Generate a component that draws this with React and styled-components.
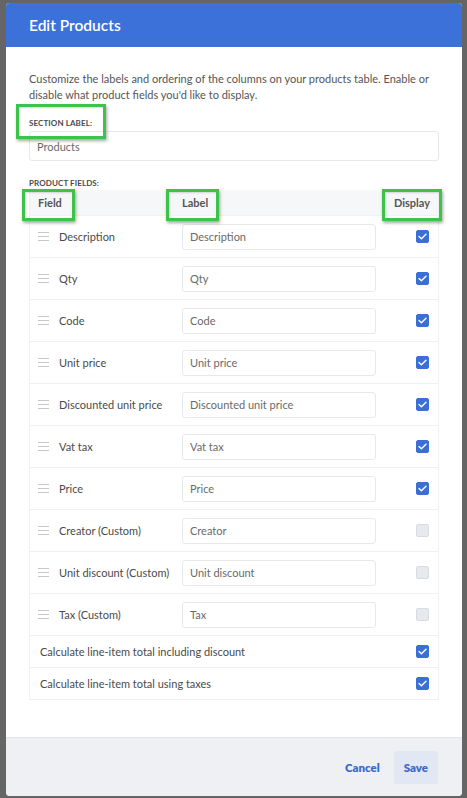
import React from "react"
import styled, { createGlobalStyle } from "styled-components"

// ---- Styles ----

const GlobalStyle = createGlobalStyle`
  html, body {
    margin: 0;
    padding: 0;
    background: #656565;
    font-family: Lato, "Open Sans", Arial, sans-serif;
    -webkit-font-smoothing: antialiased;
  }
`

const Backdrop = styled.div`
  height: 798px;
  box-sizing: border-box;
  padding: 3px 5px 2px 6px;
  background: #656565;
`

const Modal = styled.div`
  width: 456px;
  height: 793px;
  display: flex;
  flex-direction: column;
  background: #fff;
  border-radius: 4px;
  overflow: hidden;
`

const Header = styled.div`
  height: 44px;
  flex: none;
  display: flex;
  align-items: center;
  padding-left: 23px;
  background: #3b71d8;
  color: #fff;
  font-size: 15.5px;
  font-weight: 600;
`

const Body = styled.div`
  flex: 1;
  padding: 24px 23px 0;
`

const Intro = styled.p`
  margin: 0 0 15px;
  font-size: 11px;
  line-height: 16px;
  color: #555;
`

const Caption = styled.div`
  font-size: 8px;
  font-weight: 700;
  color: #4a4a4a;
  letter-spacing: 0.1px;
  margin-top: ${p => p.top || 0}px;
  margin-bottom: ${p => p.gap || 0}px;
`

// green call-out frame drawn over a piece of text
const Callout = styled.span`
  position: relative;
  display: inline-block;

  &::after {
    content: "";
    position: absolute;
    top: ${p => p.t}px;
    bottom: ${p => p.b}px;
    left: ${p => p.l}px;
    right: ${p => p.r}px;
    border: 3px solid #3dc24c;
    box-shadow: 1px 2px 3px rgba(0, 0, 0, 0.35), inset 1px 1px 2px rgba(0, 0, 0, 0.15);
    z-index: 2;
  }
`

const TextInput = styled.div`
  box-sizing: border-box;
  height: ${p => p.h || 26}px;
  width: ${p => (p.w ? p.w + "px" : "100%")};
  display: flex;
  align-items: center;
  padding-left: 7px;
  border: 1px solid #e6e8eb;
  border-radius: 3px;
  background: #fff;
  font-size: 11px;
  color: #6a6a6a;
`

const Table = styled.div`
  margin-top: 2px;
  border: 1px solid #f0f1f3;
  border-top: none;
`

const HeadRow = styled.div`
  height: 25px;
  display: grid;
  grid-template-columns: 144px 1fr auto;
  align-items: center;
  padding: 0 8px;
  background: #f6f7f9;
  font-size: 11px;
  font-weight: 700;
  color: #555;
`

const Row = styled.div`
  height: ${p => p.h || 42}px;
  box-sizing: border-box;
  display: grid;
  grid-template-columns: ${p => (p.plain ? "1fr auto" : "144px 194px 1fr auto")};
  align-items: center;
  padding: 0 9px 0 8px;
  border-top: 1px solid #f0f1f3;
  font-size: 11px;
  color: #4a4a4a;
`

const FieldName = styled.div`
  display: flex;
  align-items: center;
  gap: 10px;
`

const Handle = styled.span`
  width: 11px;
  height: 7px;
  border-top: 1px solid #c6c8cc;
  border-bottom: 1px solid #c6c8cc;
  position: relative;

  &::before {
    content: "";
    position: absolute;
    left: 0;
    right: 0;
    top: 3px;
    border-top: 1px solid #c6c8cc;
  }
`

const Box = styled.span`
  width: 13px;
  height: 13px;
  box-sizing: border-box;
  border-radius: 2px;
  display: flex;
  align-items: center;
  justify-content: center;
  background: ${p => (p.on ? "#3b6fd6" : "#e6e9ed")};
  border: 1px solid ${p => (p.on ? "#3b6fd6" : "#d8dce1")};
`

const Footer = styled.div`
  height: 58px;
  flex: none;
  display: flex;
  align-items: center;
  justify-content: flex-end;
  gap: 14px;
  padding-right: 24px;
  background: #eef0f4;
  border-top: 1px solid #e3e6ea;
`

const Button = styled.button`
  border: none;
  border-radius: 2px;
  background: ${p => (p.filled ? "#e2e8f3" : "transparent")};
  color: #3a6bcb;
  font-family: inherit;
  font-size: 11.5px;
  font-weight: 800;
  height: 33px;
  padding: 0 ${p => (p.filled ? 10 : 0)}px;
`

const Plain = styled.span`
  padding-left: 2px;
`

// ---- Data ----

const fields = [
  ["Description", "Description", true],
  ["Qty", "Qty", true],
  ["Code", "Code", true],
  ["Unit price", "Unit price", true],
  ["Discounted unit price", "Discounted unit price", true],
  ["Vat tax", "Vat tax", true],
  ["Price", "Price", true],
  ["Creator (Custom)", "Creator", false],
  ["Unit discount (Custom)", "Unit discount", false],
  ["Tax (Custom)", "Tax", false],
]

const Check = ({ on }) => (
  <Box on={on}>
    {on && (
      <svg width="9" height="7" viewBox="0 0 9 7">
        <path d="M1 3.6 L3.4 5.8 L8 1.2" fill="none" stroke="#fff" strokeWidth="1.4" strokeLinecap="round" strokeLinejoin="round" />
      </svg>
    )}
  </Box>
)

const App = () => (
  <Backdrop>
    <GlobalStyle />
    <Modal>
      <Header>Edit Products</Header>
      <Body>
        <Intro>
          Customize the labels and ordering of the columns on your products table. Enable or
          disable what product fields you'd like to display.
        </Intro>

        <Caption gap={3}>
          <Callout t={-14} b={-11} l={-13} r={-14}>SECTION LABEL:</Callout>
        </Caption>
        <TextInput h={30}>Products</TextInput>

        <Caption top={17} gap={0}>PRODUCT FIELDS:</Caption>
        <Table>
          <HeadRow>
            <span><Callout t={-7} b={-12} l={-16} r={-13}>Field</Callout></span>
            <span><Callout t={-7} b={-12} l={-16} r={-11}>Label</Callout></span>
            <span><Callout t={-7} b={-12} l={-12} r={-12}>Display</Callout></span>
          </HeadRow>
          {fields.map(([name, label, on]) => (
            <Row key={name}>
              <FieldName>
                <Handle />
                {name}
              </FieldName>
              <TextInput w={194}>{label}</TextInput>
              <span />
              <Check on={on} />
            </Row>
          ))}
          <Row h={32} plain>
            <Plain>Calculate line-item total including discount</Plain>
            <Check on />
          </Row>
          <Row h={32} plain>
            <Plain>Calculate line-item total using taxes</Plain>
            <Check on />
          </Row>
        </Table>
      </Body>
      <Footer>
        <Button>Cancel</Button>
        <Button filled>Save</Button>
      </Footer>
    </Modal>
  </Backdrop>
)

export default App
